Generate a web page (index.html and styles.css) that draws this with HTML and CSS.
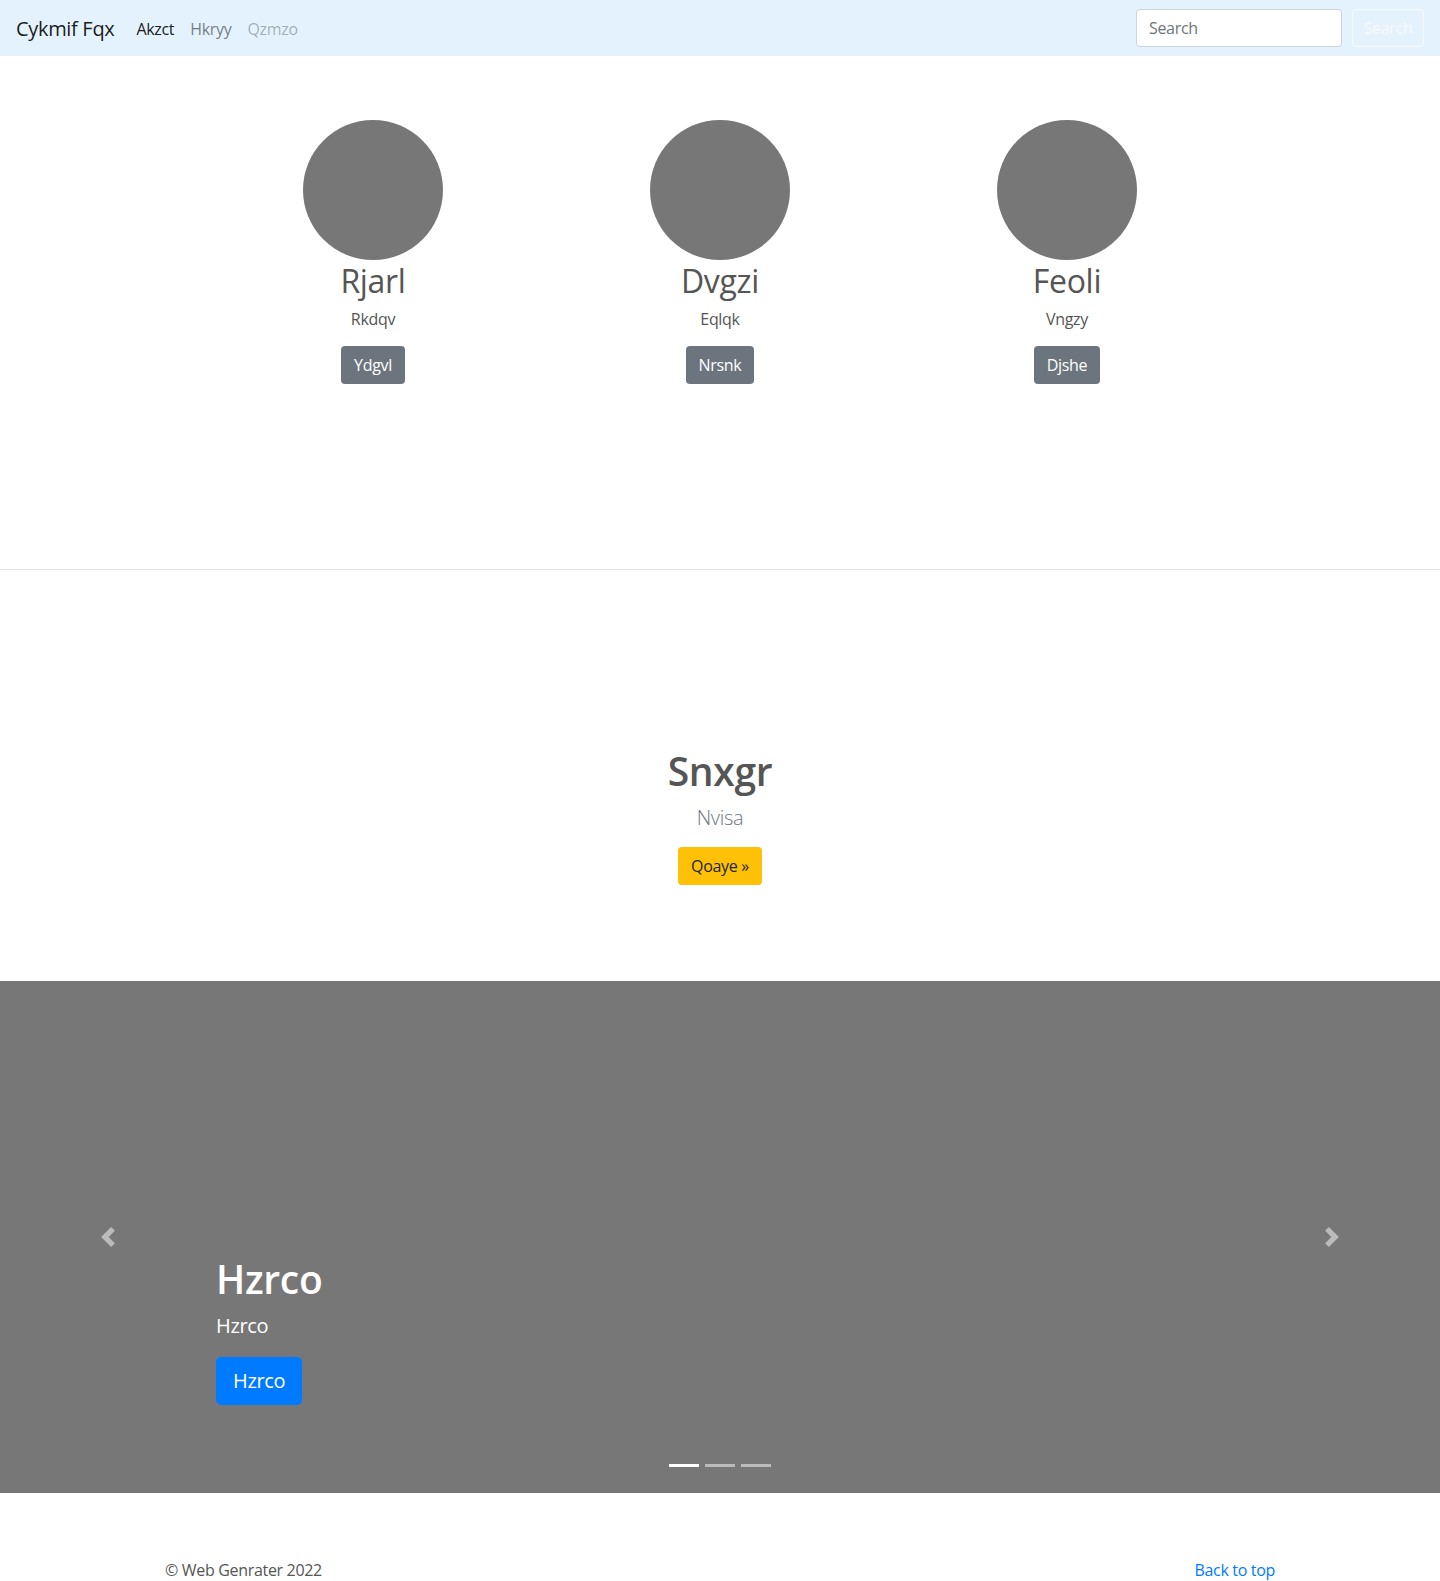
FILE: index.html
```html
<!DOCTYPE html>
<html lang="en">
<head>
<meta charset="utf-8">
<title>Cykmif Fqx</title>
<link rel="stylesheet" href="styles.css">
</head>
<body>
<nav class="navbar">
  <a class="brand" href="#">Cykmif Fqx</a>
  <ul class="nav-links">
    <li><a class="nav-link active" href="#">Akzct</a></li>
    <li><a class="nav-link" href="#">Hkryy</a></li>
    <li><a class="nav-link disabled" href="#">Qzmzo</a></li>
  </ul>
  <form class="search">
    <input class="search-input" type="text" placeholder="Search">
    <button class="search-btn" type="button">Search</button>
  </form>
</nav>

<main>
  <section class="marketing">
    <div class="marketing-row">
      <div class="member">
        <div class="avatar"></div>
        <h2 class="member-name">Rjarl</h2>
        <p class="member-role">Rkdqv</p>
        <a class="btn btn-secondary" href="#">Ydgvl</a>
      </div>
      <div class="member">
        <div class="avatar"></div>
        <h2 class="member-name">Dvgzi</h2>
        <p class="member-role">Eqlqk</p>
        <a class="btn btn-secondary" href="#">Nrsnk</a>
      </div>
      <div class="member">
        <div class="avatar"></div>
        <h2 class="member-name">Feoli</h2>
        <p class="member-role">Vngzy</p>
        <a class="btn btn-secondary" href="#">Djshe</a>
      </div>
    </div>
  </section>

  <hr class="divider">

  <section class="featurette">
    <h2 class="featurette-heading">Snxgr</h2>
    <p class="lead">Nvisa</p>
    <a class="btn btn-warning" href="#">Qoaye »</a>
  </section>

  <section class="carousel">
    <a class="carousel-control prev" href="#">
      <svg width="20" height="20" viewBox="0 0 8 8"><path fill="#fff" d="M5.25 0l-4 4 4 4 1.5-1.5L4.25 4l2.5-2.5L5.25 0z"/></svg>
    </a>
    <div class="caption">
      <h1 class="caption-title">Hzrco</h1>
      <p class="caption-text">Hzrco</p>
      <a class="btn btn-primary btn-lg" href="#">Hzrco</a>
    </div>
    <a class="carousel-control next" href="#">
      <svg width="20" height="20" viewBox="0 0 8 8"><path fill="#fff" d="M2.75 0l-1.5 1.5L3.75 4l-2.5 2.5L2.75 8l4-4-4-4z"/></svg>
    </a>
    <ol class="indicators">
      <li class="indicator active"></li>
      <li class="indicator"></li>
      <li class="indicator"></li>
    </ol>
  </section>
</main>

<footer class="footer">
  <p class="copy">© Web Genrater 2022</p>
  <a class="back-top" href="#">Back to top</a>
</footer>
</body>
</html>
```

FILE: styles.css
```css
* { box-sizing: border-box; }

body {
  margin: 0;
  font-family: "Open Sans", "Noto Sans", "Liberation Sans", sans-serif;
  font-size: 16px;
  line-height: 1.5;
  letter-spacing: -0.02em;
  color: #212529;
  background: #fff;
}

a { text-decoration: none; }

.navbar {
  display: flex;
  align-items: center;
  height: 56px;
  padding: 8px 16px;
  background: #e3f2fd;
}

.brand {
  font-size: 20px;
  line-height: 30px;
  color: rgba(0, 0, 0, 0.9);
  margin: 2px 14px 0 0;
}

.nav-links {
  display: flex;
  list-style: none;
  margin: 2px 0 0;
  padding: 0;
  flex: 1;
}

.nav-link {
  display: block;
  padding: 8px;
  color: rgba(0, 0, 0, 0.5);
}
.nav-link.active { color: rgba(0, 0, 0, 0.9); }
.nav-link.disabled { color: rgba(0, 0, 0, 0.3); }

.search {
  display: flex;
  align-items: center;
  gap: 10px;
}

.search-input {
  width: 206px;
  height: 38px;
  padding: 6px 12px;
  font: inherit;
  letter-spacing: inherit;
  color: #495057;
  background: #fff;
  border: 1px solid #ced4da;
  border-radius: 4px;
}
.search-input::placeholder { color: #6c757d; }

.search-btn {
  width: 72px;
  height: 38px;
  font: inherit;
  letter-spacing: inherit;
  color: #f8f9fa;
  background: transparent;
  border: 1px solid #f8f9fa;
  border-radius: 4px;
  padding: 6px 10px;
}

.marketing {
  padding: 64px 0 0;
  height: 513px;
}

.marketing-row {
  display: grid;
  grid-template-columns: repeat(3, 347px);
  justify-content: center;
}

.member {
  display: flex;
  flex-direction: column;
  align-items: center;
  text-align: center;
}

.avatar {
  width: 140px;
  height: 140px;
  border-radius: 50%;
  background: #777;
}

.member-name {
  margin: 2px 0 7px;
  font-size: 32px;
  font-weight: 400;
  line-height: 1.2;
  color: #555;
}

.member-role {
  margin: 0 0 15px;
  color: #555;
}

.btn {
  display: inline-block;
  padding: 6px 12px;
  font-size: 16px;
  line-height: 24px;
  border: 1px solid transparent;
  border-radius: 4px;
}
.btn-secondary { background: #6c757d; color: #fff; }
.btn-warning { background: #ffc107; color: #212529; }
.btn-primary { background: #007bff; color: #fff; }
.btn-lg { padding: 8px 16px; font-size: 20px; line-height: 30px; border-radius: 5px; }

.divider {
  margin: 0;
  border: 0;
  border-top: 1px solid rgba(0, 0, 0, 0.1);
}

.featurette {
  display: flex;
  flex-direction: column;
  align-items: center;
  padding: 177px 0 96px;
  text-align: center;
}

.featurette-heading {
  margin: 0 0 8px;
  font-size: 39px;
  font-weight: 600;
  line-height: 48px;
  color: #555;
}

.lead {
  margin: 0 0 14px;
  font-size: 20px;
  font-weight: 300;
  color: #6c757d;
}

.carousel {
  position: relative;
  height: 512px;
  background: #777;
  display: flex;
  align-items: flex-end;
}

.carousel-control {
  position: absolute;
  top: 0;
  bottom: 0;
  width: 15%;
  display: flex;
  align-items: center;
  justify-content: center;
  opacity: 0.5;
}
.carousel-control.prev { left: 0; }
.carousel-control.next { right: 0; }

.caption {
  margin: 0 15% 88px;
  color: #fff;
}

.caption-title {
  margin: 0 0 8px;
  font-size: 39px;
  font-weight: 600;
  line-height: 48px;
}

.caption-text {
  margin: 0 0 16px;
  font-size: 20px;
}

.indicators {
  position: absolute;
  left: 0;
  right: 0;
  bottom: 26px;
  display: flex;
  justify-content: center;
  list-style: none;
  margin: 0;
  padding: 0;
}

.indicator {
  width: 30px;
  height: 3px;
  margin: 0 3px;
  background: #fff;
  opacity: 0.5;
}
.indicator.active { opacity: 1; }

.footer {
  display: flex;
  justify-content: space-between;
  width: 1110px;
  margin: 65px auto 0;
  padding-bottom: 32px;
}

.copy { margin: 0; color: #555; }

.back-top { color: #007bff; }
```
